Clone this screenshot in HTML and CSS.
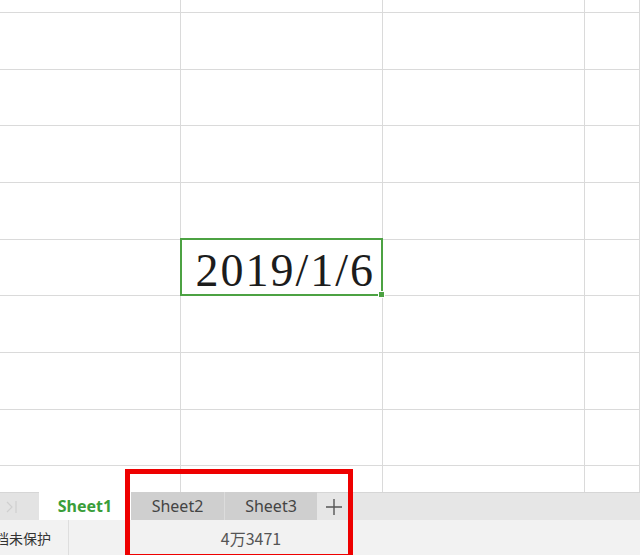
FILE: index.html
```html
<!DOCTYPE html>
<html lang="zh">
<head>
<meta charset="utf-8">
<title>Sheet</title>
<link rel="stylesheet" href="styles.css">
</head>
<body>
<div class="app">
  <div class="grid">
    <div class="c"></div><div class="c"></div><div class="c"></div><div class="c"></div>
    <div class="c"></div><div class="c"></div><div class="c"></div><div class="c"></div>
    <div class="c"></div><div class="c"></div><div class="c"></div><div class="c"></div>
    <div class="c"></div><div class="c"></div><div class="c"></div><div class="c"></div>
    <div class="c"></div><div class="c"></div><div class="c"></div><div class="c"></div>
    <div class="c"></div><div class="c sel"><span class="date">2019/1/6</span><span class="selbox"><span class="handle"></span></span></div><div class="c"></div><div class="c"></div>
    <div class="c"></div><div class="c"></div><div class="c"></div><div class="c"></div>
    <div class="c"></div><div class="c"></div><div class="c"></div><div class="c"></div>
    <div class="c"></div><div class="c"></div><div class="c"></div><div class="c"></div>
    <div class="c last"></div><div class="c last"></div><div class="c last"></div><div class="c last"></div>
  </div>
  <div class="tabbar">
    <div class="nav"><svg width="12" height="16" viewBox="0 0 12 16"><path d="M1 3 L6 8 L1 13" fill="none" stroke="#cfcfcf" stroke-width="1.2"/><path d="M10 2 V14" stroke="#cfcfcf" stroke-width="1.2"/></svg></div>
    <div class="tab active">Sheet1</div>
    <div class="tab t2">Sheet2</div>
    <div class="tab t3">Sheet3</div>
    <div class="add"><svg width="18" height="18" viewBox="0 0 18 18"><path d="M9 1 V17 M1 9 H17" stroke="#555" stroke-width="1.4" fill="none"/></svg></div>
    <div class="fill"></div>
  </div>
  <div class="status">
    <div class="prot"><span class="prot-text">文档未保护</span></div>
    <div class="sum">4万3471</div>
  </div>
  <div class="mark"></div>
</div>
</body>
</html>
```
FILE: styles.css
```css
html, body {
  margin: 0;
  padding: 0;
  background: #ffffff;
}
.app {
  position: relative;
  width: 640px;
  height: 555px;
  overflow: hidden;
  font-family: "Noto Sans", "Noto Sans CJK SC", sans-serif;
}
.grid {
  display: grid;
  grid-template-columns: 181px 202px 202px 55px;
  grid-template-rows: 13px 57px 56px 57px 57px 56px 57px 57px 56px 26px;
  height: 492px;
  background: #ffffff;
}
.c {
  box-sizing: border-box;
  border-right: 1px solid #dadada;
  border-bottom: 1px solid #dadada;
}
.c.last {
  border-bottom: none;
}
.sel {
  position: relative;
  display: flex;
  align-items: flex-start;
  justify-content: flex-end;
}
.date {
  font-family: "Liberation Serif", "DejaVu Serif", serif;
  font-size: 46px;
  line-height: 46px;
  letter-spacing: 2px;
  color: #1c1c1c;
  margin-top: 8px;
  margin-right: 7px;
}
.selbox {
  position: absolute;
  left: -1px;
  top: -2px;
  right: -1px;
  bottom: -1px;
  border: 2px solid #4ca243;
}
.handle {
  position: absolute;
  right: -4px;
  bottom: -4px;
  width: 5px;
  height: 5px;
  background: #4ca243;
  border: 1px solid #fff;
  box-sizing: content-box;
}
.tabbar {
  display: flex;
  height: 28px;
  background: #e6e6e6;
  border-top: 1px solid #d6d6d6;
  box-sizing: border-box;
}
.nav {
  width: 39px;
  display: flex;
  align-items: center;
  padding-left: 6px;
  box-sizing: border-box;
  background: #e3e3e3;
}
.tab {
  display: flex;
  align-items: center;
  justify-content: center;
  font-size: 16px;
  color: #444;
  height: 28px;
  margin-top: -1px;
}
.tab.active {
  width: 92px;
  background: #ffffff;
  color: #3a9e3a;
  font-weight: bold;
}
.tab.t2 {
  width: 94px;
  background: #cfcfcf;
  border-right: 1px solid #dcdcdc;
  box-sizing: border-box;
}
.tab.t3 {
  width: 92px;
  background: #cfcfcf;
}
.add {
  width: 33px;
  display: flex;
  align-items: center;
  justify-content: center;
}
.fill {
  flex: 1;
}
.status {
  display: flex;
  height: 35px;
  background: #f2f2f2;
  font-family: "Noto Sans CJK SC", "Noto Sans", sans-serif;
}
.prot {
  width: 68px;
  border-right: 1px solid #dedede;
  overflow: hidden;
  display: flex;
  align-items: center;
  font-size: 14px;
  color: #333;
}
.prot-text {
  white-space: nowrap;
  margin-left: -19px;
}
.sum {
  flex: 0 0 364px;
  display: flex;
  align-items: center;
  justify-content: center;
  font-size: 16px;
  color: #555;
}
.mark {
  position: absolute;
  left: 125px;
  top: 469px;
  width: 228px;
  height: 90px;
  border: 5px solid #ee0000;
  box-sizing: border-box;
}
```
